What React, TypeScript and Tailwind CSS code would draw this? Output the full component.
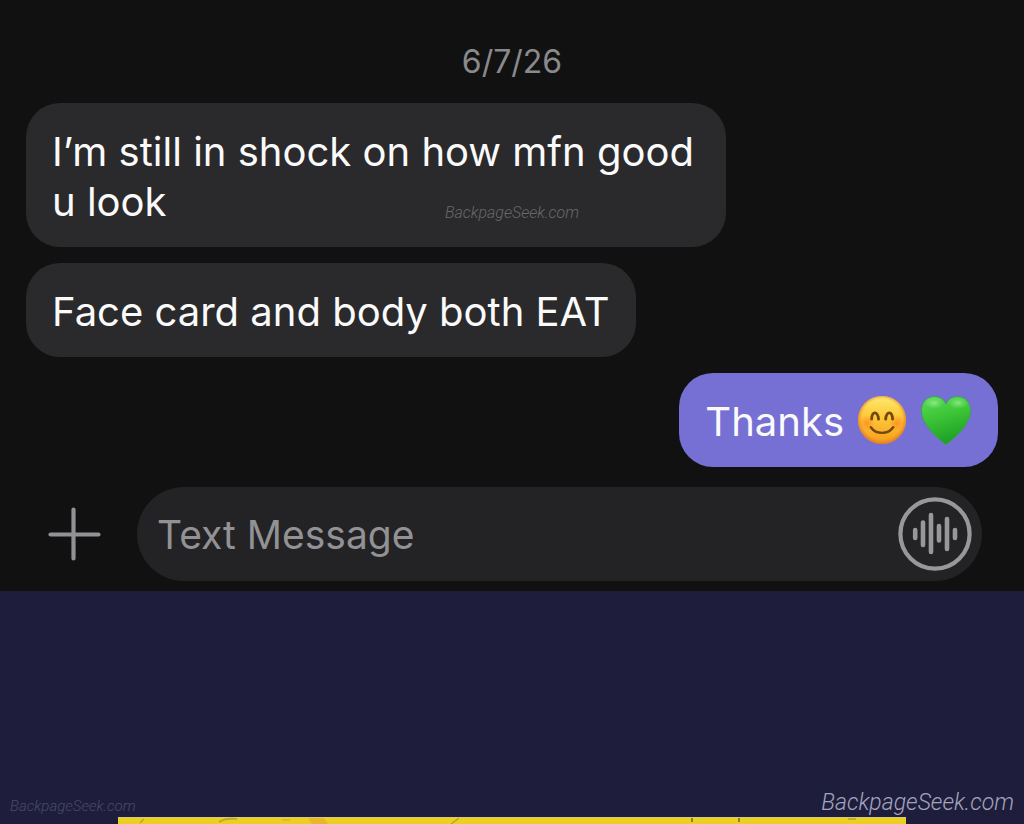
import React, { useState } from 'react';

type Message = {
    id: number;
    text: string;
    sent?: boolean;
    emojis?: React.FC[];
};

const SmileEmoji = () => (
    <svg viewBox="-2 -1 52 50" className="h-[50px] w-[52px]" role="img" aria-label="Smiling face">
        <defs>
            <linearGradient id="smile-face" x1="0" y1="0" x2="0" y2="1">
                <stop offset="0" stopColor="#fdea72" />
                <stop offset="0.4" stopColor="#fecb3a" />
                <stop offset="1" stopColor="#f79d1e" />
            </linearGradient>
            <radialGradient id="smile-edge" cx="0.5" cy="0.48" r="0.52">
                <stop offset="0.8" stopColor="#f08a1c" stopOpacity="0" />
                <stop offset="1" stopColor="#dc7524" stopOpacity="0.9" />
            </radialGradient>
            <radialGradient id="smile-cheek">
                <stop offset="0" stopColor="#fb7a1c" stopOpacity="0.6" />
                <stop offset="1" stopColor="#fb7a1c" stopOpacity="0" />
            </radialGradient>
        </defs>
        <circle cx="24" cy="24" r="24" fill="url(#smile-face)" />
        <circle cx="24" cy="24" r="24" fill="url(#smile-edge)" />
        <circle cx="9" cy="27" r="8" fill="url(#smile-cheek)" />
        <circle cx="39" cy="27" r="8" fill="url(#smile-cheek)" />
        <g fill="none" stroke="#74480c" strokeLinecap="round">
            <path d="M13.600 23.200c.5-8.400 5.900-8.400 7 0" strokeWidth="2.800" />
            <path d="M27.600 23.200c1.100-8.400 6.500-8.400 7 0" strokeWidth="2.800" />
            <path d="M12.800 31.200c5.400 7.600 17 7.600 22.400 0" strokeWidth="2.400" />
        </g>
    </svg>
);

const HeartEmoji = () => (
    <svg viewBox="-2 -1 52 50" className="h-[50px] w-[52px]" role="img" aria-label="Green heart">
        <defs>
            <linearGradient id="heart-body" x1="0" y1="0" x2="0.3" y2="1">
                <stop offset="0" stopColor="#5bdc58" />
                <stop offset="0.45" stopColor="#3fc739" />
                <stop offset="1" stopColor="#1fa125" />
            </linearGradient>
            <radialGradient id="heart-shine">
                <stop offset="0" stopColor="#b4f7ae" stopOpacity="0.6" />
                <stop offset="1" stopColor="#8df083" stopOpacity="0" />
            </radialGradient>
        </defs>
        <path
            d="M24 48.500C18.500 44.500 -.5 30 -.5 14.500C-.5 6 5.500 .5 12.500 .5C18 .5 22 3.500 24 8C26 3.500 30 .5 35.500 .5C42.500 .5 48.500 6 48.500 14.500C48.500 30 29.500 44.500 24 48.500Z"
            fill="url(#heart-body)"
            stroke="#3a9f4c"
            strokeWidth="0.8"
        />
        <ellipse cx="12" cy="7" rx="10" ry="6" fill="url(#heart-shine)" />
        <ellipse cx="36" cy="7" rx="10" ry="6" fill="url(#heart-shine)" />
    </svg>
);

const MESSAGES: Message[] = [
    { id: 1, text: 'I’m still in shock on how mfn good u look' },
    { id: 2, text: 'Face card and body both EAT' },
    { id: 3, text: 'Thanks', sent: true, emojis: [SmileEmoji, HeartEmoji] },
];

const Bubble = ({ message }: { message: Message }) => (
    <li
        className={`max-w-[700px] rounded-[34px] px-[26px] pb-5 pt-6 ${
            message.sent ? 'self-end bg-[#7770d4]' : 'self-start bg-[#2a2a2c]'
        }`}
    >
        <p className="flex items-start gap-3">
            <span>{message.text}</span>
            {message.emojis?.map((Emoji, i) => (
                <span key={i} className="-mt-0.5 block">
                    <Emoji />
                </span>
            ))}
        </p>
    </li>
);

const AudioIcon = () => (
    <svg viewBox="0 0 74 74" className="size-[74px]" fill="none" stroke="#98989b" strokeLinecap="round" strokeWidth="4.6">
        <circle cx="37" cy="37" r="34.600" strokeWidth="4.200" />
        <path d="M17.200 33v8M25 25.500v22.500M33 18v37M41 29v14.500M49 22v30M57 33v8" />
    </svg>
);

const Composer = () => {
    const [draft, setDraft] = useState('');

    return (
        <form className="mt-5 flex items-center gap-9 pl-[22px] pr-4" onSubmit={(e) => e.preventDefault()}>
            <button type="button" aria-label="Add attachment">
                <svg viewBox="0 0 53 54" className="h-[54px] w-[53px]" stroke="#929296" strokeWidth="4.200" strokeLinecap="round">
                    <path d="M2.500 27.500h48M25.500 2.500v49" />
                </svg>
            </button>
            <div className="flex flex-1 items-center rounded-full bg-[#232325] py-[10px] pl-5 pr-[10px]">
                <input
                    type="text"
                    aria-label="Text Message"
                    placeholder="Text Message"
                    value={draft}
                    onChange={(e) => setDraft(e.target.value)}
                    className="min-w-0 flex-1 bg-transparent pt-[2px] text-[39px] outline-none placeholder:text-[#929295]"
                />
                <button type="button" aria-label="Record audio">
                    <AudioIcon />
                </button>
            </div>
        </form>
    );
};

const BannerEdge = () => (
    <svg viewBox="0 0 788 7" preserveAspectRatio="none" className="block h-[7px] w-full" aria-hidden="true">
        <path d="M0 0h788v7H0z" fill="#ebcf22" />
        <path d="M164 2h8v2h-8zM190 1h16l4 6h-16z" fill="#e8b52c" />
        <path d="M0 .5h788" stroke="#d8c978" />
        <path d="M22 6l4-4M101 5c5-3 11-4 18-3M333 7l8-6M730 2h8" stroke="#b9a52c" strokeWidth="1.500" fill="none" />
        <path d="M574 1v4M621 1v4" stroke="#8f7d20" strokeWidth="2" />
    </svg>
);

const App = () => {
    return (
        <div className="flex min-h-screen flex-col bg-[#1e1e3c] font-['Inter',sans-serif] text-[40px] leading-[50px] text-[#fafafa]">
            <main className="relative bg-[#111112] px-[26px] pb-[10px] pt-10">
                <time className="mb-5 block text-center text-[32px] leading-[43px] text-[#8a8a8c]">6/7/26</time>
                <ul className="flex flex-col gap-4">
                    {MESSAGES.map((message) => (
                        <Bubble key={message.id} message={message} />
                    ))}
                </ul>
                <Composer />
                <span className="absolute left-1/2 top-[203px] -translate-x-1/2 font-['Roboto',sans-serif] text-base leading-5 font-light italic text-[#68686a]">
                    BackpageSeek.com
                </span>
            </main>

            <footer className="mt-auto font-['Roboto',sans-serif] font-light italic">
                <div className="flex items-end justify-between px-[10px]">
                    <span className="text-[15px] leading-[22px] text-[#4a4a66]">BackpageSeek.com</span>
                    <span className="text-[23px] leading-7 text-[#a4a4bc]">BackpageSeek.com</span>
                </div>
                <div className="px-[118px]">
                    <BannerEdge />
                </div>
            </footer>
        </div>
    );
};

export default App;
